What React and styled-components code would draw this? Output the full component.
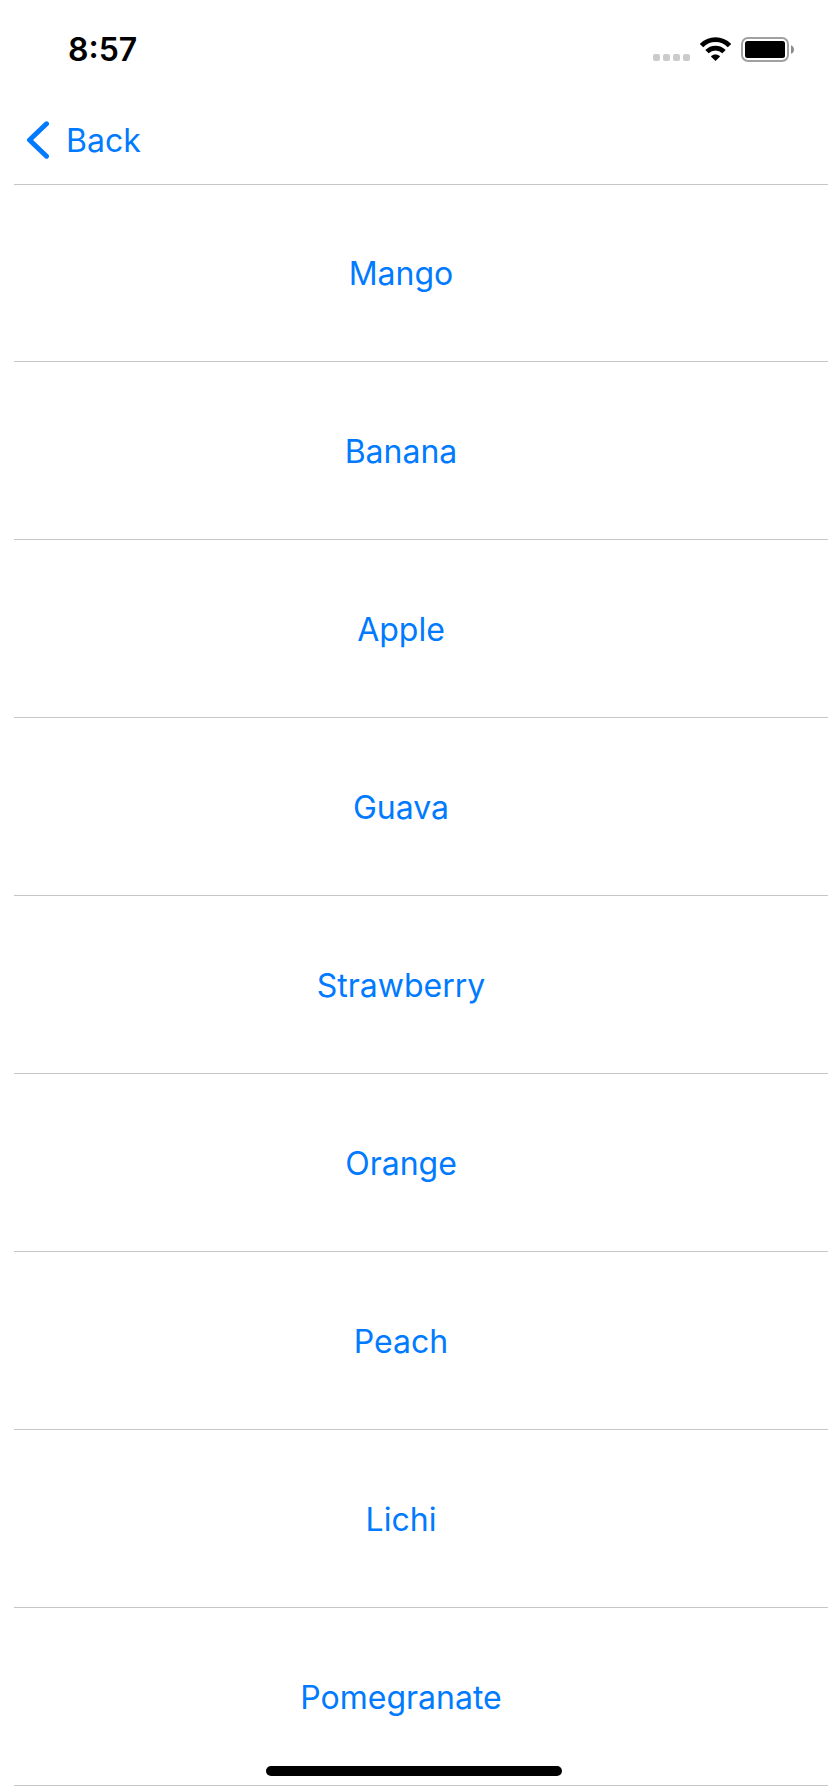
import React from "react";
import styled, { createGlobalStyle } from "styled-components";

const GlobalStyle = createGlobalStyle`
  *, *::before, *::after { box-sizing: border-box; }
  body {
    margin: 0;
    background: #fff;
    font-family: Inter, "Liberation Sans", sans-serif;
  }
`;

const Screen = styled.div`
  min-height: 100vh;
`;

const StatusBar = styled.div`
  display: flex;
  align-items: flex-start;
  justify-content: space-between;
  height: 100px;
  padding: 30px 33px 0 68px;
`;

const Time = styled.time`
  font-size: 32px;
  font-weight: 600;
  line-height: 40px;
  color: #000;
`;

const StatusIcons = styled.div`
  display: flex;
  align-items: flex-end;
  gap: 10px;
  height: 32px;
`;

const NavBar = styled.nav`
  display: flex;
  align-items: center;
  height: 84px;
  padding: 0 26px 2px;
`;

const BackButton = styled.button`
  display: flex;
  align-items: center;
  gap: 14px;
  padding: 0;
  border: 0;
  background: none;
  color: #007aff;
  font-family: inherit;
  font-size: 32px;
  line-height: 40px;
  cursor: pointer;
`;

const List = styled.ul`
  margin: 0;
  padding: 0 0 0 14px;
  list-style: none;
`;

const Row = styled.li`
  display: flex;
  height: 178px;
  padding: 2px 40px 0 0;
  border-bottom: 1px solid #c6c6c8;

  &:first-child {
    border-top: 1px solid #c6c6c8;
  }
`;

const RowButton = styled.button`
  flex: 1;
  padding: 0;
  border: 0;
  background: none;
  color: #007aff;
  font-family: inherit;
  font-size: 32px;
  line-height: 40px;
  cursor: pointer;
`;

const HomeIndicator = styled.div`
  position: fixed;
  bottom: 16px;
  left: 50%;
  width: 296px;
  height: 10px;
  margin-left: -148px;
  border-radius: 5px;
  background: #000;
`;

const fruits = [
  "Mango",
  "Banana",
  "Apple",
  "Guava",
  "Strawberry",
  "Orange",
  "Peach",
  "Lichi",
  "Pomegranate",
];

const SignalIcon = () => (
  <svg width="37" height="25" viewBox="0 0 37 25" fill="#cbcbcb" aria-hidden="true">
    {[0, 10, 20, 30].map((x) => (
      <rect key={x} x={x} y="17" width="7" height="7" rx="2" />
    ))}
  </svg>
);

const WifiIcon = () => (
  <svg width="31" height="25" viewBox="0 0 31 25" aria-hidden="true">
    <g fill="none" stroke="#000" strokeWidth="4.8">
      <path d="M1.5 8.7C9.2 0.7 21.8 0.7 29.5 8.7" />
      <path d="M7 14.6C11.7 9.9 19.3 9.9 24 14.6" />
    </g>
    <path d="M15.5 24L10.9 19.4C13.4 17 17.6 17 20.1 19.4Z" fill="#000" />
  </svg>
);

const BatteryIcon = () => (
  <svg width="54" height="25" viewBox="0 0 54 25" aria-hidden="true">
    <rect x="1" y="1" width="46" height="23" rx="6" fill="none" stroke="#a0a0a0" strokeWidth="2" />
    <rect x="4" y="4" width="40" height="17" rx="2.5" fill="#000" />
    <path d="M50 8.2C54 9.4 54 15.6 50 16.8Z" fill="#8c8c8c" />
  </svg>
);

const ChevronIcon = () => (
  <svg width="26" height="40" viewBox="0 0 26 40" aria-hidden="true">
    <path
      d="M20.5 2.8L3.5 19L20.5 35.2"
      fill="none"
      stroke="#007aff"
      strokeWidth="5"
      strokeLinecap="round"
      strokeLinejoin="round"
    />
  </svg>
);

export default function App() {
  return (
    <Screen>
      <GlobalStyle />
      <header>
        <StatusBar>
          <Time>8:57</Time>
          <StatusIcons>
            <SignalIcon />
            <WifiIcon />
            <BatteryIcon />
          </StatusIcons>
        </StatusBar>
        <NavBar>
          <BackButton type="button">
            <ChevronIcon />
            Back
          </BackButton>
        </NavBar>
      </header>
      <main>
        <List>
          {fruits.map((name) => (
            <Row key={name}>
              <RowButton type="button">{name}</RowButton>
            </Row>
          ))}
        </List>
      </main>
      <HomeIndicator />
    </Screen>
  );
}
